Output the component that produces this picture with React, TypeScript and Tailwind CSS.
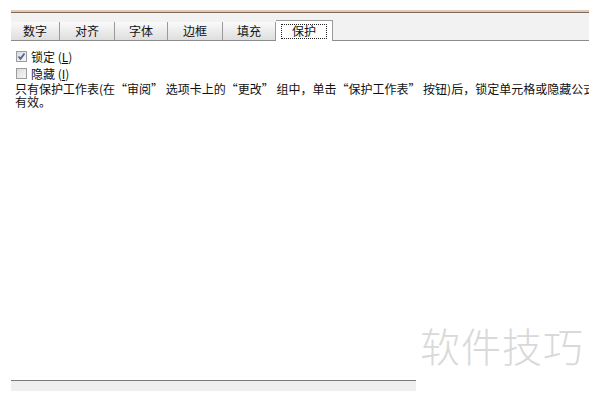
const cjk = { fontFamily: '"Noto Sans CJK SC", "Liberation Sans", sans-serif' };

const tabs = [
  { label: '数字', w: 'w-[49px]' },
  { label: '对齐', w: 'w-[55px]' },
  { label: '字体', w: 'w-[53px]' },
  { label: '边框', w: 'w-[55px]' },
  { label: '填充', w: 'w-[53px]' },
];

function Check({ checked }: { checked?: boolean }) {
  return (
    <span className="w-[11px] h-[11px] border border-[#9c9c9c] bg-gradient-to-br from-[#dcdcdc] to-[#f6f6f6] flex items-center justify-center shrink-0">
      {checked && (
        <svg width="9" height="9" viewBox="0 0 9 9">
          <path d="M1.5 4.5 L3.5 6.8 L7.5 1.5" fill="none" stroke="#4a64a0" strokeWidth="1.8" />
        </svg>
      )}
    </span>
  );
}

export default function App() {
  return (
    <div className="relative w-[600px] h-[400px] bg-white overflow-hidden text-[12px] text-[#111]" style={cjk}>
      <div className="flex flex-col h-full pt-[10px] pb-[9px]">
        {/* tab strip */}
        <div className="mx-[11px] w-[578px]">
          <div className="h-[3px] bg-[#dccbbb] border-b border-[#7d6a5a]" />
          <div className="h-[28px] bg-[#f2f2f2] border-b border-[#8c8c8c] flex items-end">
            {tabs.map((t) => (
              <div
                key={t.label}
                className={`${t.w} h-[18px] bg-gradient-to-b from-[#fafafa] to-[#dedede] border-r border-[#9a9a9a] flex items-center justify-center leading-none`}
              >
                {t.label}
              </div>
            ))}
            <div className="w-[57px] h-[21px] -mb-px bg-white border-t border-r border-[#9a9a9a] flex items-center justify-center">
              <span className="border border-dotted border-[#222] w-[46px] h-[15px] flex items-center justify-center leading-none">
                保护
              </span>
            </div>
          </div>
        </div>

        {/* content */}
        <div className="pl-[16px] pt-[7px] flex flex-col">
          <label className="flex items-center gap-[4px] h-[17px] leading-[14px]">
            <Check checked />
            <span>
              锁定 (<span className="underline">L</span>)
            </span>
          </label>
          <label className="flex items-center gap-[4px] h-[17px] leading-[14px]">
            <Check />
            <span>
              隐藏 (<span className="underline">I</span>)
            </span>
          </label>
          <div className="-ml-[1px] w-[574px] overflow-hidden leading-[13px] whitespace-nowrap">
            <div>只有保护工作表(在“审阅” 选项卡上的“更改” 组中，单击“保护工作表” 按钮)后，锁定单元格或隐藏公式才</div>
            <div>有效。</div>
          </div>
        </div>

        {/* bottom bar */}
        <div className="mt-auto ml-[11px] w-[405px]">
          <div className="h-px bg-[#7a7a7a]" />
          <div className="h-[10px] bg-[#efefef]" />
        </div>
      </div>

      <div className="absolute left-[420px] top-[325px] text-[40px] leading-none text-[#d9d9d9] tracking-[1px] font-light">
        软件技巧
      </div>
    </div>
  );
}
